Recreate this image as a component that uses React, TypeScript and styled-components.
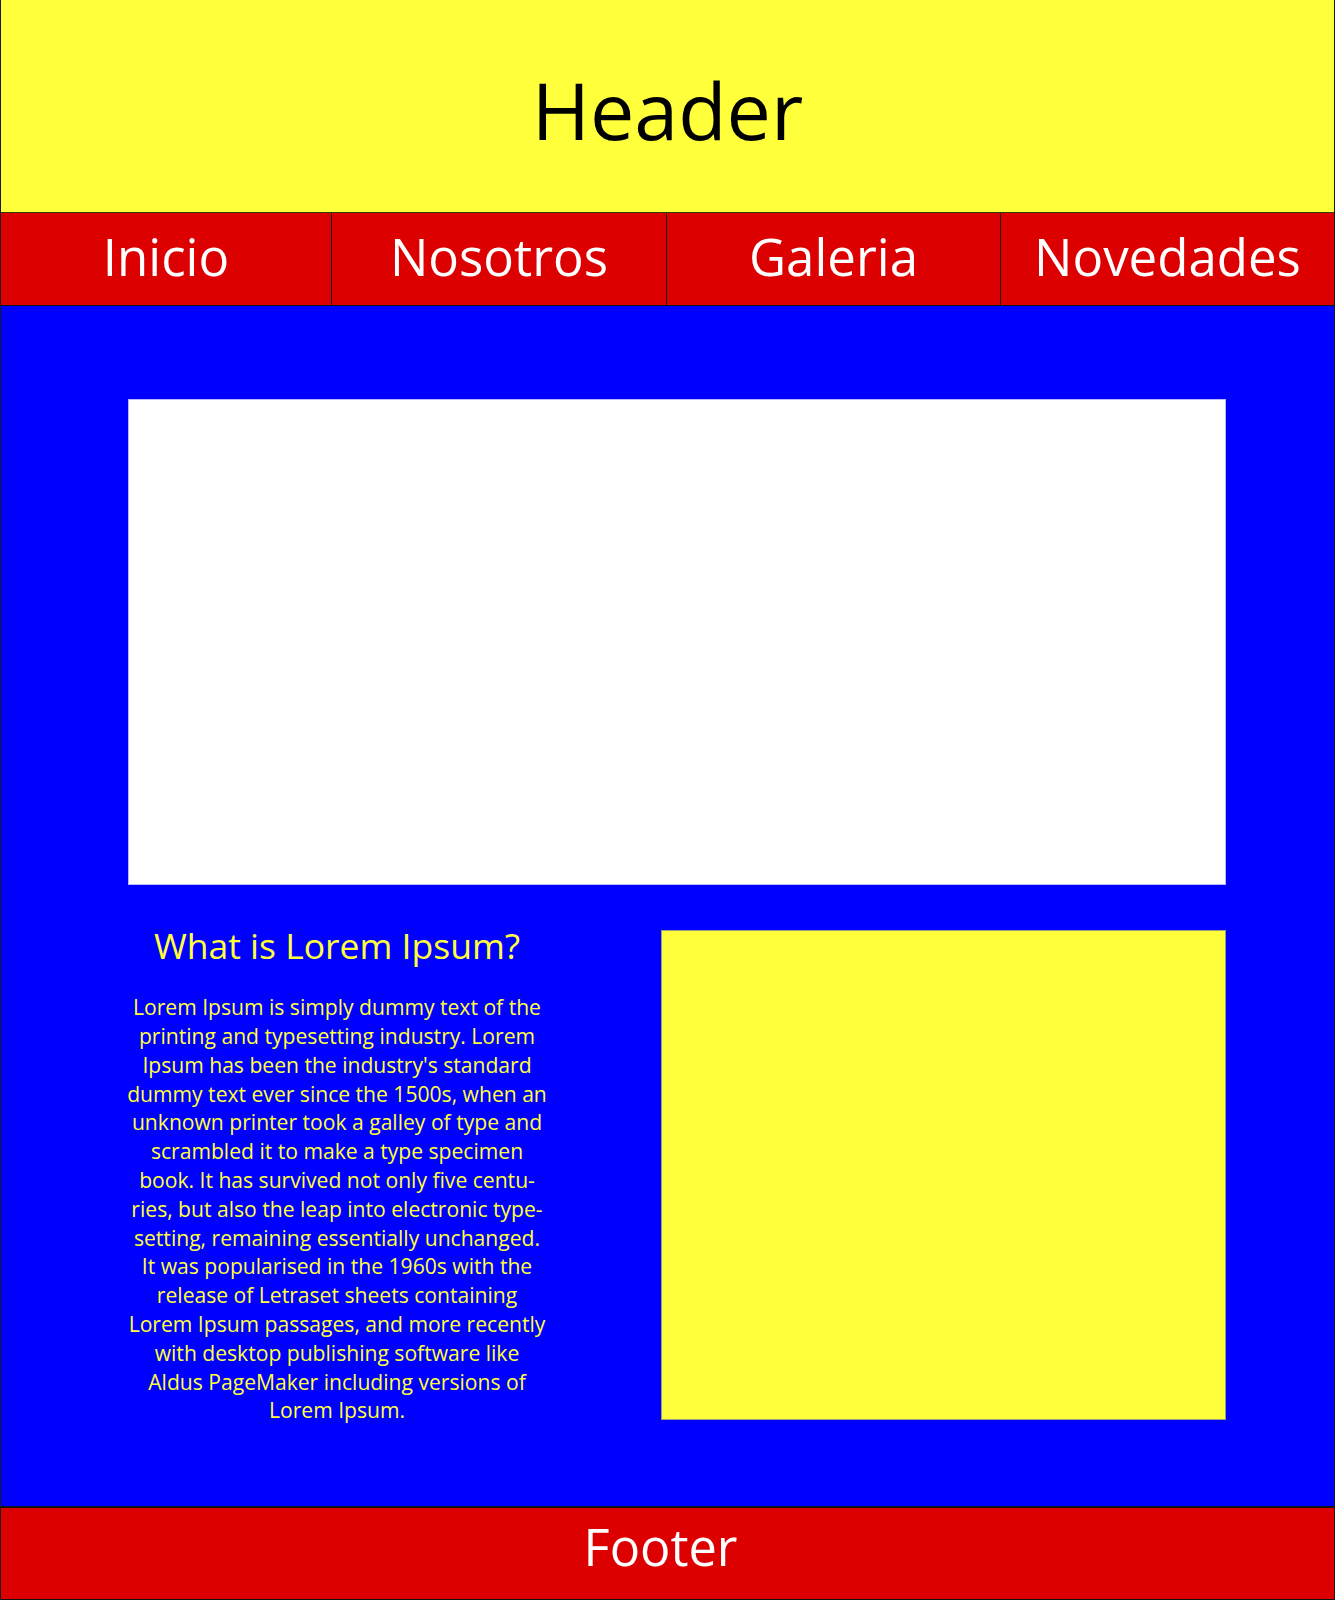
import { FC } from 'react';
import styled, { createGlobalStyle } from 'styled-components';

const GlobalStyle = createGlobalStyle`
  html, body {
    margin: 0;
    padding: 0;
    background: #ffffff;
  }
  body {
    font-family: "Open Sans", "Liberation Sans", sans-serif;
  }
  * {
    box-sizing: border-box;
  }
`;

const Page = styled.div`
  width: 1335px;
  height: 1600px;
  display: flex;
  flex-direction: column;
  border-left: 1px solid #1a1a1a;
  border-right: 1px solid #1a1a1a;
`;

const Header = styled.header`
  flex-shrink: 0;
  height: 213px;
  background: #ffff3b;
  border-bottom: 1px solid #3a3a10;
  display: flex;
  justify-content: center;
  padding-top: 70px;
`;

const HeaderTitle = styled.h1`
  margin: 0;
  font-size: 79px;
  font-weight: 400;
  line-height: 1;
  color: #000000;
`;

const Nav = styled.nav`
  flex-shrink: 0;
  height: 93px;
  background: #dd0000;
  display: grid;
  grid-template-columns: 331px 335px 334px 1fr;
  border-bottom: 1px solid #111111;
`;

type NavItemProps = {
  $last?: boolean;
};

const NavItem = styled.a<NavItemProps>`
  display: flex;
  align-items: center;
  justify-content: center;
  color: #ffffff;
  font-size: 51px;
  text-decoration: none;
  border-right: ${(props) => (props.$last ? 'none' : '1px solid #111111')};
  padding-bottom: 6px;
`;

const Main = styled.main`
  flex: 1;
  min-height: 0;
  background: #0000ff;
  padding: 93px 108px 0 127px;
  display: flex;
  flex-direction: column;
  gap: 45px;
`;

const Banner = styled.div`
  flex-shrink: 0;
  height: 486px;
  background: #ffffff;
  border: 1px solid #b8b8ff;
`;

const Content = styled.section`
  display: grid;
  grid-template-columns: 418px 565px;
  justify-content: space-between;
  align-items: start;
`;

const Article = styled.article`
  color: #ffff3b;
  text-align: center;
`;

const ArticleTitle = styled.h2`
  margin: -8px 0 0;
  font-size: 35.5px;
  font-weight: 400;
  line-height: 1.3;
`;

const ArticleText = styled.p`
  margin: 25px -10px 0;
  font-size: 21.1px;
  line-height: 28.8px;
`;

const Picture = styled.div`
  height: 490px;
  background: #ffff3b;
  border: 1px solid #9a9a80;
`;

const Footer = styled.footer`
  flex-shrink: 0;
  height: 94px;
  background: #dd0000;
  border-top: 2px solid #111111;
  border-bottom: 1px solid #111111;
  display: flex;
  align-items: center;
  justify-content: center;
  color: #ffffff;
  font-size: 50.5px;
  padding: 0 14px 14px 0;
`;

const links = ['Inicio', 'Nosotros', 'Galeria', 'Novedades'];

const lines = [
  'Lorem Ipsum is simply dummy text of the',
  'printing and typesetting industry. Lorem',
  "Ipsum has been the industry's standard",
  'dummy text ever since the 1500s, when an',
  'unknown printer took a galley of type and',
  'scrambled it to make a type specimen',
  'book. It has survived not only five centu-',
  'ries, but also the leap into electronic type-',
  'setting, remaining essentially unchanged.',
  'It was popularised in the 1960s with the',
  'release of Letraset sheets containing',
  'Lorem Ipsum passages, and more recently',
  'with desktop publishing software like',
  'Aldus PageMaker including versions of',
  'Lorem Ipsum.',
];

const App: FC = () => {
  return (
    <>
      <GlobalStyle />
      <Page>
        <Header>
          <HeaderTitle>Header</HeaderTitle>
        </Header>
        <Nav>
          {links.map((link, i) => (
            <NavItem key={link} href="#" $last={i === links.length - 1}>
              {link}
            </NavItem>
          ))}
        </Nav>
        <Main>
          <Banner />
          <Content>
            <Article>
              <ArticleTitle>What is Lorem Ipsum?</ArticleTitle>
              <ArticleText>
                {lines.map((line, i) => (
                  <span key={i}>
                    {line}
                    {i < lines.length - 1 && <br />}
                  </span>
                ))}
              </ArticleText>
            </Article>
            <Picture />
          </Content>
        </Main>
        <Footer>Footer</Footer>
      </Page>
    </>
  );
};

export default App;
